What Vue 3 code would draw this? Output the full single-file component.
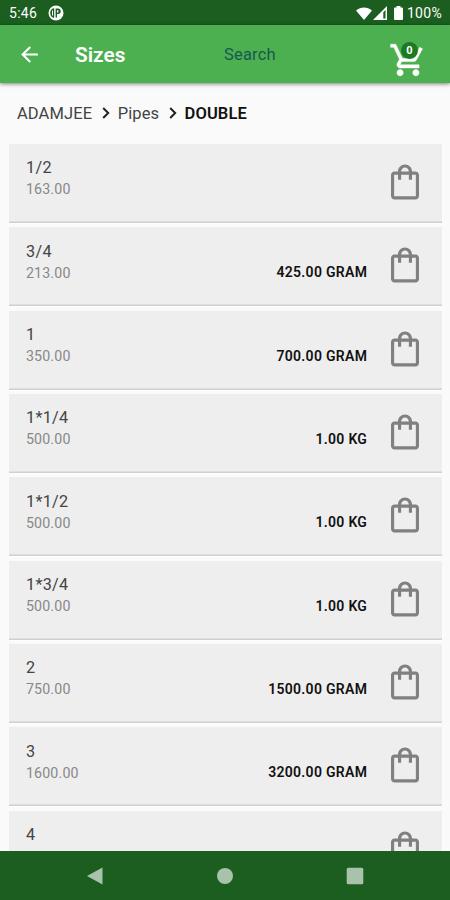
<template>
  <div class="screen">
    <div class="status-bar">
      <span class="time">5:46</span>
      <svg class="notification" viewBox="0 0 16 16">
        <circle cx="8" cy="8" r="7.5" fill="#fff" />
        <path
          d="M6.200 3.200H5.400a5.200 5.200 0 0 0 0 9.600h.8zM7.600 3.600h2.400a2.700 2.700 0 0 1 0 5.400H9v3.600H7.600z"
          fill="#1b5e20"
        />
        <path d="M9 5.200h1.400v2.200H9zM4 5.500h1v5H4z" fill="#fff" />
      </svg>
      <div class="status-icons">
        <svg class="wifi" viewBox="0 0 16 13">
          <path d="M0 3.400C4.600-.6 11.400-.6 16 3.400L8 13z" fill="#fff" />
        </svg>
        <svg class="signal" viewBox="0 0 14 14">
          <path d="M0 14 14 0v14z" fill="#fff" />
          <path d="M10.300 6.300 12.500 4v8.500h-2.200z" fill="#1b5e20" />
        </svg>
        <svg class="battery" viewBox="0 0 9 14">
          <path
            d="M2.500 0h4v1.500H8a1 1 0 0 1 1 1V13a1 1 0 0 1-1 1H1a1 1 0 0 1-1-1V2.500a1 1 0 0 1 1-1h1.500z"
            fill="#fff"
          />
        </svg>
        <span class="level">100%</span>
      </div>
    </div>

    <header class="app-bar">
      <button class="back-button" aria-label="Back">
        <svg viewBox="0 0 24 24">
          <path
            d="M20 11H7.830l5.590-5.590L12 4l-8 8 8 8 1.410-1.410L7.830 13H20v-2z"
            fill="#fff"
          />
        </svg>
      </button>
      <h1 class="title">Sizes</h1>
      <span class="search">Search</span>
      <button class="cart-button" aria-label="Cart">
        <svg viewBox="0 0 24 24">
          <path
            d="M7 18c-1.100 0-1.990.9-1.990 2S5.900 22 7 22s2-.9 2-2-.9-2-2-2zm10 0c-1.100 0-1.990.9-1.990 2s.89 2 1.990 2 2-.9 2-2-.9-2-2-2zm-9.830-3.250l.03-.12.9-1.630h7.450c.75 0 1.410-.41 1.750-1.030l3.860-7.010L19.420 4h-.01l-1.100 2-2.760 5H8.530l-.13-.27L6.160 6l-.95-2-.94-2H1v2h2l3.600 7.590-1.350 2.450c-.16.28-.25.61-.25.96 0 1.100.9 2 2 2h12v-2H7.420c-.13 0-.25-.11-.25-.25z"
            fill="#fff"
            stroke="#fff"
            stroke-width="0.3"
          />
        </svg>
        <span class="badge">{{ cartCount }}</span>
      </button>
    </header>

    <nav class="breadcrumb">
      <span class="brand">ADAMJEE</span>
      <svg viewBox="0 0 8 12"><path d="M1.200 1 6.200 6l-5 5" /></svg>
      <span class="category">Pipes</span>
      <svg viewBox="0 0 8 12"><path d="M1.200 1 6.200 6l-5 5" /></svg>
      <span class="current">DOUBLE</span>
    </nav>

    <main class="list">
      <div class="item" v-for="item in items" :key="item.size">
        <div class="info">
          <div class="size">{{ item.size }}</div>
          <div class="price">{{ item.price }}</div>
        </div>
        <div class="weight">{{ item.weight }}</div>
        <svg class="bag" viewBox="0 0 24 24">
          <path
            d="M18 6h-2c0-2.210-1.790-4-4-4S8 3.790 8 6H6c-1.100 0-2 .9-2 2v12c0 1.100.9 2 2 2h12c1.100 0 2-.9 2-2V8c0-1.100-.9-2-2-2zm-6-2.300c1.200 0 2.200 1 2.200 2.300H9.800c0-1.300 1-2.300 2.200-2.300zM18.200 20.200H5.800V7.800H8v2.900h1.800V7.800h4.400v2.900H16V7.800h2.200z"
            fill="#808080"
          />
        </svg>
      </div>
    </main>

    <footer class="nav-bar">
      <svg viewBox="0 0 18 18"><path d="M1 9 16.500.5v17z" /></svg>
      <svg viewBox="0 0 18 18"><circle cx="9" cy="9" r="8" /></svg>
      <svg viewBox="0 0 18 18">
        <rect x="0.700" y="0.700" width="16.600" height="16.600" rx="1.500" />
      </svg>
    </footer>
  </div>
</template>

<script setup>
import { ref } from "vue";

const cartCount = ref(0);

const items = [
  { size: "1/2", price: "163.00", weight: "" },
  { size: "3/4", price: "213.00", weight: "425.00 GRAM" },
  { size: "1", price: "350.00", weight: "700.00 GRAM" },
  { size: "1*1/4", price: "500.00", weight: "1.00 KG" },
  { size: "1*1/2", price: "500.00", weight: "1.00 KG" },
  { size: "1*3/4", price: "500.00", weight: "1.00 KG" },
  { size: "2", price: "750.00", weight: "1500.00 GRAM" },
  { size: "3", price: "1600.00", weight: "3200.00 GRAM" },
  { size: "4", price: "", weight: "" },
];
</script>

<style>
body {
  background: #fafafa;
}
</style>

<style scoped>
.screen {
  display: flex;
  flex-direction: column;
  height: 100vh;
  overflow: hidden;
  background: #fafafa;
  font-family: Roboto, sans-serif;
}

.screen svg {
  display: block;
  flex: none;
}

.status-bar {
  display: flex;
  align-items: center;
  flex: none;
  box-sizing: border-box;
  height: 25px;
  padding: 1px 8px 0 9px;
  background: #1b5e20;
  color: #fff;
  font-size: 14px;
}

.time {
  width: 39px;
  letter-spacing: 0.3px;
}

.notification {
  width: 16px;
  height: 16px;
}

.status-icons {
  display: flex;
  align-items: center;
  margin-left: auto;
}

.wifi {
  width: 16px;
  height: 13px;
}

.signal {
  width: 14px;
  height: 14px;
  margin-left: 1px;
}

.battery {
  width: 9px;
  height: 14px;
  margin: 0 4px 0 7px;
}

.level {
  letter-spacing: 0.3px;
}

.app-bar {
  display: flex;
  align-items: center;
  flex: none;
  z-index: 1;
  height: 58px;
  background: #4caf50;
  box-shadow: 0 1px 4px rgba(0, 0, 0, 0.5);
}

.back-button,
.cart-button {
  padding: 0;
  border: 0;
  background: none;
}

.back-button {
  width: 25px;
  margin: 1px 0 0 17px;
}

.title {
  width: 149px;
  margin: 0 0 0 33px;
  color: #fff;
  font-size: 20.8px;
  font-weight: 600;
  line-height: 24px;
  padding-top: 2px;
}

.search {
  padding-top: 1px;
  color: #17594f;
  font-size: 16.5px;
  letter-spacing: 0.2px;
}

.cart-button {
  position: relative;
  width: 38px;
  margin: 12px 23px 0 auto;
}

.badge {
  position: absolute;
  top: 1px;
  left: 12px;
  width: 17px;
  height: 17px;
  border-radius: 50%;
  background: #1b7a22;
  color: #fff;
  font: 700 11px/17px Roboto, sans-serif;
  text-align: center;
}

.breadcrumb {
  display: flex;
  align-items: center;
  flex: none;
  box-sizing: border-box;
  height: 61px;
  padding: 0 0 1px 17px;
  color: #444;
  font-size: 16.5px;
  letter-spacing: 0.1px;
}

.breadcrumb svg {
  width: 8px;
  height: 12px;
  margin: 0 8px 0 9.500px;
  fill: none;
  stroke: #222;
  stroke-width: 2;
}

.current {
  color: #111;
  font-weight: 600;
}

.list {
  display: flex;
  flex-direction: column;
  gap: 4.35px;
  flex: 1;
  min-height: 0;
  overflow: hidden;
  padding: 0 8px 0 9px;
}

.item {
  display: flex;
  flex: none;
  box-sizing: border-box;
  height: 79px;
  padding: 14px 16px 0 17px;
  background: #eee;
  box-shadow: inset 0 -1.5px 0 #cfcfcf, 0 1px 2px #fff;
}

.info {
  flex: 1;
  padding-top: 0.4px;
}

.size {
  color: #444;
  font-size: 16.2px;
  line-height: 20px;
  letter-spacing: 0.3px;
}

.price {
  color: #888;
  font-size: 14.2px;
  line-height: 22px;
  letter-spacing: 0.15px;
}

.weight {
  margin: 20px 16.8px 0 0;
  color: #111;
  font-size: 14px;
  font-weight: 600;
  line-height: 22px;
  letter-spacing: 0.3px;
}

.bag {
  width: 42px;
  height: 42px;
  margin-top: 3px;
}

.nav-bar {
  display: flex;
  align-items: center;
  justify-content: space-between;
  flex: none;
  box-sizing: border-box;
  height: 49px;
  padding: 0 86px;
  background: #1b5e20;
}

.nav-bar svg {
  width: 18px;
  height: 18px;
  fill: #a9c2ab;
}
</style>
